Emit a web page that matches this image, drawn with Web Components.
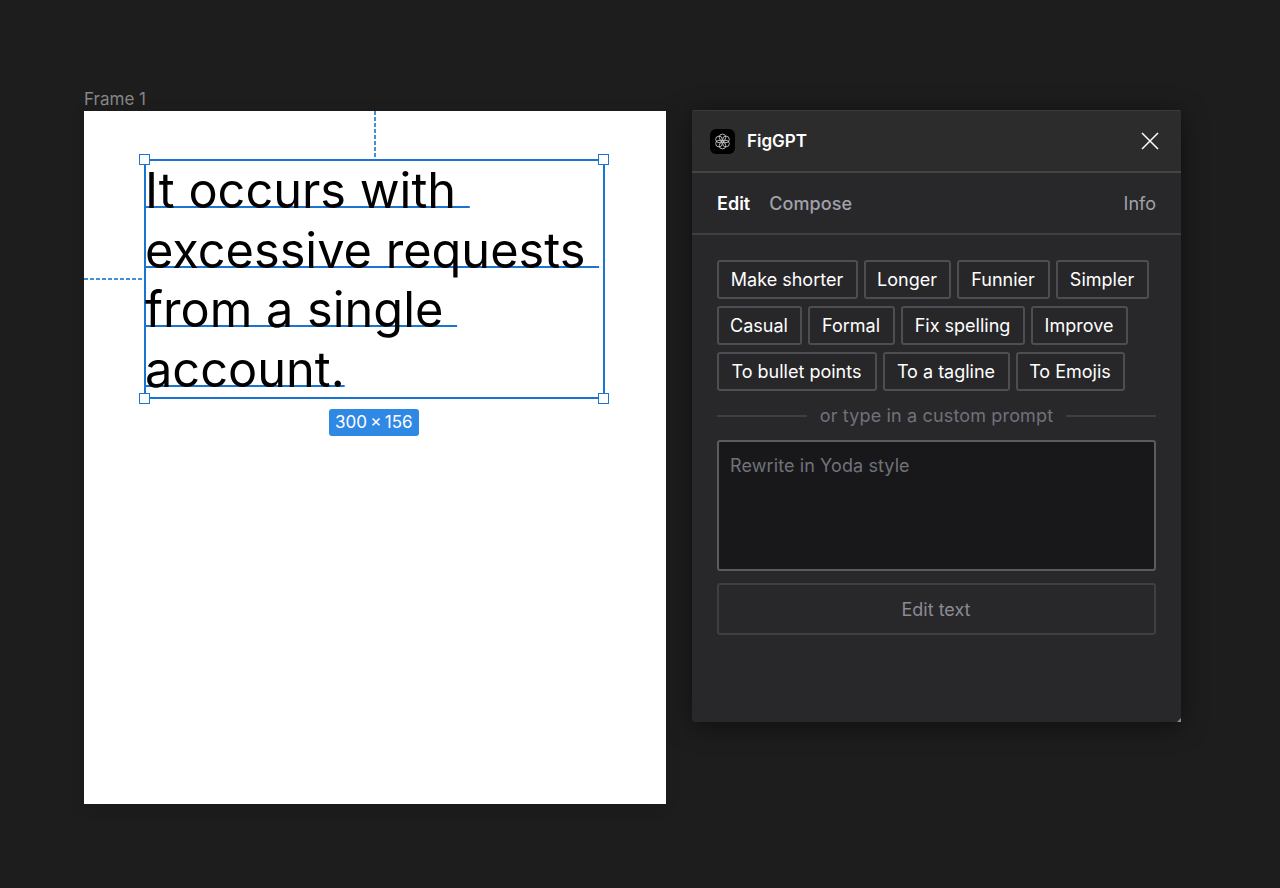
<!DOCTYPE html>
<html>
<head>
<meta charset="utf-8">
<title>FigGPT</title>
<style>
  html, body { margin: 0; height: 100%; background: #1d1d1d; overflow: hidden; }
  body { font-family: Inter, "Liberation Sans", sans-serif; }
</style>
</head>
<body>
<fig-canvas>
  <fig-frame label="Frame 1" style="left:84px;top:111px">
    <fig-selection style="left:60px;top:48px" size="300 × 156">
      <span>It occurs with </span><span>excessive requests </span><span>from a single </span><span>account.</span>
    </fig-selection>
  </fig-frame>
  <plugin-window title="FigGPT" style="left:692px;top:110px">
    <plugin-tabs></plugin-tabs>
    <plugin-chips>
      <prompt-chip style="width:141px">Make shorter</prompt-chip><prompt-chip style="width:87px">Longer</prompt-chip><prompt-chip style="width:93px">Funnier</prompt-chip><prompt-chip style="width:93px">Simpler</prompt-chip>
      <prompt-chip style="width:85px">Casual</prompt-chip><prompt-chip style="width:87px">Formal</prompt-chip><prompt-chip style="width:124px">Fix spelling</prompt-chip><prompt-chip style="width:97px">Improve</prompt-chip>
      <prompt-chip style="width:160px">To bullet points</prompt-chip><prompt-chip style="width:127px">To a tagline</prompt-chip><prompt-chip style="width:109px">To Emojis</prompt-chip>
    </plugin-chips>
    <plugin-prompt></plugin-prompt>
  </plugin-window>
</fig-canvas>

<script>
class FigCanvas extends HTMLElement {
    constructor() {
        super();
        this.attachShadow({ mode: 'open' });
        this.shadowRoot.innerHTML = `
            <style>
                :host { display: block; position: relative; width: 1280px; height: 888px; background: #1d1d1d; overflow: hidden; }
            </style>
            <slot></slot>
        `;
    }
}

/**
 * White design frame, placed on the free canvas by its inline left/top.
 */
class FigFrame extends HTMLElement {
    constructor() {
        super();
        this.attachShadow({ mode: 'open' });
        this.shadowRoot.innerHTML = `
            <style>
                :host { display: block; position: absolute; width: 582px; height: 693px; background: #fff; box-shadow: 0 2px 14px rgba(0,0,0,.12); }
                #label { position: absolute; left: 0; top: -22px; font: 17px/20px Inter, sans-serif; color: #868686; }
                .guide { position: absolute; }
                #top { left: 290px; top: 0; width: 2px; height: 46px; background: repeating-linear-gradient(180deg, #3f8fdc 0 4px, transparent 4px 6px); }
                #left { left: 0; top: 167px; width: 58px; height: 2px; background: repeating-linear-gradient(90deg, #3f8fdc 0 4px, transparent 4px 6px); }
            </style>
            <div id="label"></div>
            <div class="guide" id="top"></div>
            <div class="guide" id="left"></div>
            <slot></slot>
        `;
        this.shadowRoot.querySelector('#label').textContent = this.getAttribute('label');
    }
}

/**
 * Selected text layer: outline, corner handles, baselines and the size badge.
 */
class FigSelection extends HTMLElement {
    constructor() {
        super();
        this.attachShadow({ mode: 'open' });
        this.shadowRoot.innerHTML = `
            <style>
                :host { display: block; position: absolute; width: 457px; height: 236px; border: 2px solid #1b75d0; }
                #text { font: 48.7px/59.6px Inter, sans-serif; color: #000; margin: 0 0 0 -1px; }
                ::slotted(span) { display: block; white-space: pre; text-decoration: underline 2px #1b75d0; text-decoration-skip-ink: none; text-underline-offset: -2px; }
                .h { position: absolute; width: 9px; height: 9px; background: #fff; border: 1.5px solid #1b75d0; }
                #tl { left: -7px; top: -7px; } #tr { right: -6px; top: -7px; }
                #bl { left: -7px; bottom: -7px; } #br { right: -6px; bottom: -7px; }
                #badge { position: absolute; left: 183px; top: 248px; height: 27px; padding: 0 6px; background: #2f88e4; color: #fff; font: 17px/27px Inter, sans-serif; word-spacing: -1.5px; border-radius: 3px; }
            </style>
            <div id="text"><slot></slot></div>
            <div class="h" id="tl"></div><div class="h" id="tr"></div><div class="h" id="bl"></div><div class="h" id="br"></div>
            <div id="badge"></div>
        `;
        this.shadowRoot.querySelector('#badge').textContent = this.getAttribute('size');
    }
}

/**
 * The plugin window with its title bar; the body is passed in through the slot.
 */
class PluginWindow extends HTMLElement {
    constructor() {
        super();
        this.attachShadow({ mode: 'open' });
        this.shadowRoot.innerHTML = `
            <style>
                :host { display: block; position: absolute; width: 489px; height: 612px; background: #28282b; border-radius: 2px; box-shadow: 0 4px 24px rgba(0,0,0,.5); font-family: Inter, sans-serif; }
                header { display: flex; align-items: center; height: 60px; padding: 0 22px 0 18px; background: #2c2c2c; border-top: 1px solid #3a3a3a; border-bottom: 2px solid #444446; border-radius: 2px 2px 0 0; }
                #logo { width: 25px; height: 25px; background: #000; border-radius: 6px; display: flex; align-items: center; justify-content: center; }
                #name { margin-left: 12px; font-size: 17px; font-weight: 600; color: #fff; flex: 1; }
                #grip { position: absolute; right: 0; bottom: 0; }
            </style>
            <header>
                <div id="logo">
                    <svg width="17" height="17" viewBox="0 0 17 17" fill="none" stroke="#d8d8d8" stroke-width=".8">
                        <circle cx="8.5" cy="4.4" r="3.3"/><circle cx="8.5" cy="12.6" r="3.3"/>
                        <circle cx="5" cy="6.4" r="3.3"/><circle cx="12" cy="6.4" r="3.3"/>
                        <circle cx="5" cy="10.6" r="3.3"/><circle cx="12" cy="10.6" r="3.3"/>
                    </svg>
                </div>
                <div id="name"></div>
                <svg width="18" height="18" viewBox="0 0 18 18" stroke="#fff" stroke-width="1.5"><path d="M1 1 17 17M17 1 1 17"/></svg>
            </header>
            <slot></slot>
            <svg id="grip" width="4" height="4" viewBox="0 0 4 4"><path d="M4 0V4H0Z" fill="#8a8a8a"/></svg>
        `;
        this.shadowRoot.querySelector('#name').textContent = this.getAttribute('title');
    }
}

class PluginTabs extends HTMLElement {
    constructor() {
        super();
        this.attachShadow({ mode: 'open' });
        this.shadowRoot.innerHTML = `
            <style>
                :host { display: flex; align-items: center; gap: 19px; height: 60px; padding: 0 25px; border-bottom: 2px solid #3f3f43; font: 18px Inter, sans-serif; color: #a1a1aa; }
                #edit { color: #fff; font-weight: 600; }
                #info { margin-left: auto; }
                #compose { font-weight: 500; letter-spacing: .1px; }
            </style>
            <span id="edit">Edit</span><span id="compose">Compose</span><span id="info">Info</span>
        `;
    }
}

class PluginChips extends HTMLElement {
    constructor() {
        super();
        this.attachShadow({ mode: 'open' });
        this.shadowRoot.innerHTML = `
            <style>
                :host { display: flex; flex-wrap: wrap; gap: 7px 6px; padding: 25px 25px 0; }
            </style>
            <slot></slot>
        `;
    }
}

class PromptChip extends HTMLElement {
    constructor() {
        super();
        this.attachShadow({ mode: 'open' });
        this.shadowRoot.innerHTML = `
            <style>
                :host { display: block; height: 39px; box-sizing: border-box; padding-right: 1px; text-align: center; border: 2px solid #4d4d52; border-radius: 3px; background: #27272a; color: #fff; font: 18px/35px Inter, sans-serif; white-space: nowrap; }
            </style>
            <slot></slot>
        `;
    }
}

/**
 * Divider, custom prompt box and the submit button.
 */
class PluginPrompt extends HTMLElement {
    constructor() {
        super();
        this.attachShadow({ mode: 'open' });
        this.shadowRoot.innerHTML = `
            <style>
                :host { display: block; padding: 0 25px; font: 18px Inter, sans-serif; }
                #divider { display: flex; align-items: center; gap: 13px; height: 49px; color: #71717a; letter-spacing: .15px; }
                #divider i { flex: 1; height: 2px; background: #3f3f43; }
                #box { height: 131px; box-sizing: border-box; border: 2px solid #5a5a60; border-radius: 3px; background: #18181b; color: #71717a; padding: 13px 11px; line-height: 22px; letter-spacing: .1px; }
                #go { margin-top: 12px; height: 52px; box-sizing: border-box; border: 2px solid #3f3f43; border-radius: 3px; display: flex; align-items: center; justify-content: center; color: #8b8b92; padding-right: 1px; }
            </style>
            <div id="divider"><i></i><span>or type in a custom prompt</span><i></i></div>
            <div id="box">Rewrite in Yoda style</div>
            <div id="go">Edit text</div>
        `;
    }
}

customElements.define('fig-canvas', FigCanvas);
customElements.define('fig-frame', FigFrame);
customElements.define('fig-selection', FigSelection);
customElements.define('plugin-window', PluginWindow);
customElements.define('plugin-tabs', PluginTabs);
customElements.define('plugin-chips', PluginChips);
customElements.define('prompt-chip', PromptChip);
customElements.define('plugin-prompt', PluginPrompt);
</script>
</body>
</html>
